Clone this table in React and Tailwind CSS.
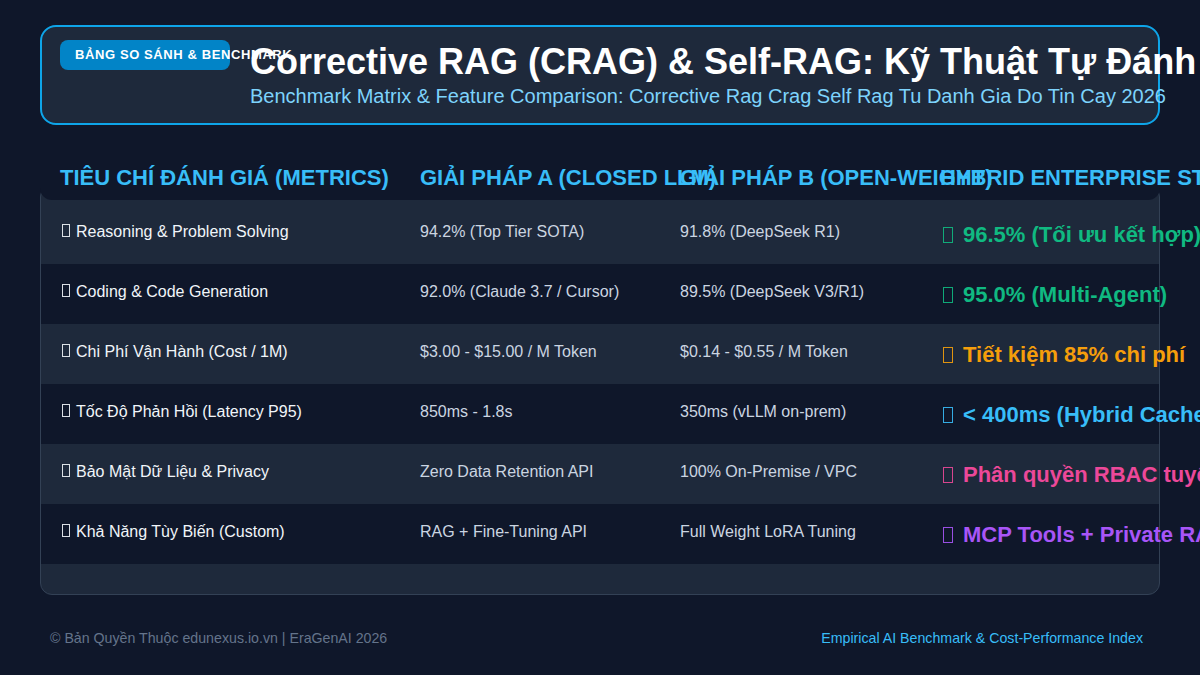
import React from 'react';

const rows = [
  {
    metric: 'Reasoning & Problem Solving',
    a: '94.2% (Top Tier SOTA)',
    b: '91.8% (DeepSeek R1)',
    hybrid: '96.5% (Tối ưu kết hợp)',
    color: 'text-[#10b981]',
  },
  {
    metric: 'Coding & Code Generation',
    a: '92.0% (Claude 3.7 / Cursor)',
    b: '89.5% (DeepSeek V3/R1)',
    hybrid: '95.0% (Multi-Agent)',
    color: 'text-[#10b981]',
  },
  {
    metric: 'Chi Phí Vận Hành (Cost / 1M)',
    a: '$3.00 - $15.00 / M Token',
    b: '$0.14 - $0.55 / M Token',
    hybrid: 'Tiết kiệm 85% chi phí',
    color: 'text-[#f59e0b]',
  },
  {
    metric: 'Tốc Độ Phản Hồi (Latency P95)',
    a: '850ms - 1.8s',
    b: '350ms (vLLM on-prem)',
    hybrid: '< 400ms (Hybrid Cache)',
    color: 'text-[#38bdf8]',
  },
  {
    metric: 'Bảo Mật Dữ Liệu & Privacy',
    a: 'Zero Data Retention API',
    b: '100% On-Premise / VPC',
    hybrid: 'Phân quyền RBAC tuyệt đối',
    color: 'text-[#ec4899]',
  },
  {
    metric: 'Khả Năng Tùy Biến (Custom)',
    a: 'RAG + Fine-Tuning API',
    b: 'Full Weight LoRA Tuning',
    hybrid: 'MCP Tools + Private RAG',
    color: 'text-[#a855f7]',
  },
];

const headers = [
  'Tiêu Chí Đánh Giá (Metrics)',
  'Giải Pháp A (Closed LLM)',
  'Giải Pháp B (Open-Weight)',
  'Hybrid Enterprise Stack',
];

// missing-glyph box, the emoji in the source page has no font here
const Tofu = ({ big }) =>
  big ? (
    <span className="inline-block w-[10px] h-[16px] ml-[3px] mr-[10px] align-[-1px] border border-current opacity-90" />
  ) : (
    <span className="inline-block w-[8px] h-[13px] ml-[2px] mr-[6px] border border-current opacity-90" />
  );

const BenchmarkPage = () => {
  return (
    <div className="min-h-screen w-full bg-[#0f172a] px-10 pt-[25px] font-['Liberation_Sans',Arial,sans-serif] overflow-hidden">
      {/* header card */}
      <div className="h-[100px] rounded-2xl border-2 border-[#0ea5e9] bg-[#1e293b] px-[18px] pt-[13px] flex items-start gap-5">
        <div className="w-[170px] h-[30px] shrink-0 rounded-lg bg-[#0284c7] pl-[15px] flex items-center">
          <span className="whitespace-nowrap text-[13px] tracking-[0.6px] font-bold uppercase text-white">
            Bảng So Sánh & Benchmark
          </span>
        </div>
        <div className="whitespace-nowrap">
          <h1 className="text-[36px] leading-[44px] font-bold text-white">
            Corrective RAG (CRAG) & Self-RAG: Kỹ Thuật Tự Đánh Giá Độ Tin Cậy
          </h1>
          <p className="text-[20px] leading-[24px] text-[#7dd3fc]">
            Benchmark Matrix & Feature Comparison: Corrective Rag Crag Self Rag Tu Danh Gia Do Tin Cay 2026
          </p>
        </div>
      </div>

      {/* table */}
      <div className="mt-[60px] rounded-xl border border-[#334155] bg-[#1e293b] pb-[30px]">
        <div className="-mt-[31px] -mx-px mb-[4px] h-[45px] rounded-b-xl bg-[#0f172a] grid grid-cols-[360px_260px_260px_1fr] pl-5 items-center">
          {headers.map((h) => (
            <div key={h} className="whitespace-nowrap text-[22px] font-bold uppercase text-[#38bdf8]">
              {h}
            </div>
          ))}
        </div>
        {rows.map((r, i) => (
          <div
            key={r.metric}
            className={`h-[60px] grid grid-cols-[360px_260px_260px_1fr] items-start pt-[16px] pl-[19px] ${
              i % 2 === 0 ? 'bg-[#1e293b]' : 'bg-[#0f172a]'
            }`}
          >
            <div className="whitespace-nowrap text-[16px] leading-[24px] text-[#f1f5f9]">
              <Tofu />
              {r.metric}
            </div>
            <div className="whitespace-nowrap text-[16px] leading-[24px] text-[#cbd5e1]">{r.a}</div>
            <div className="whitespace-nowrap text-[16px] leading-[24px] text-[#cbd5e1]">{r.b}</div>
            <div className={`whitespace-nowrap text-[22px] leading-[30px] font-bold ${r.color}`}>
              <Tofu big />
              {r.hybrid}
            </div>
          </div>
        ))}
      </div>

      {/* footer */}
      <div className="mt-[33px] pl-[10px] pr-[17px] flex justify-between text-[14.2px] leading-[20px]">
        <span className="text-[#64748b]">© Bản Quyền Thuộc edunexus.io.vn | EraGenAI 2026</span>
        <span className="text-[#38bdf8]">Empirical AI Benchmark & Cost-Performance Index</span>
      </div>
    </div>
  );
};

export default BenchmarkPage;
